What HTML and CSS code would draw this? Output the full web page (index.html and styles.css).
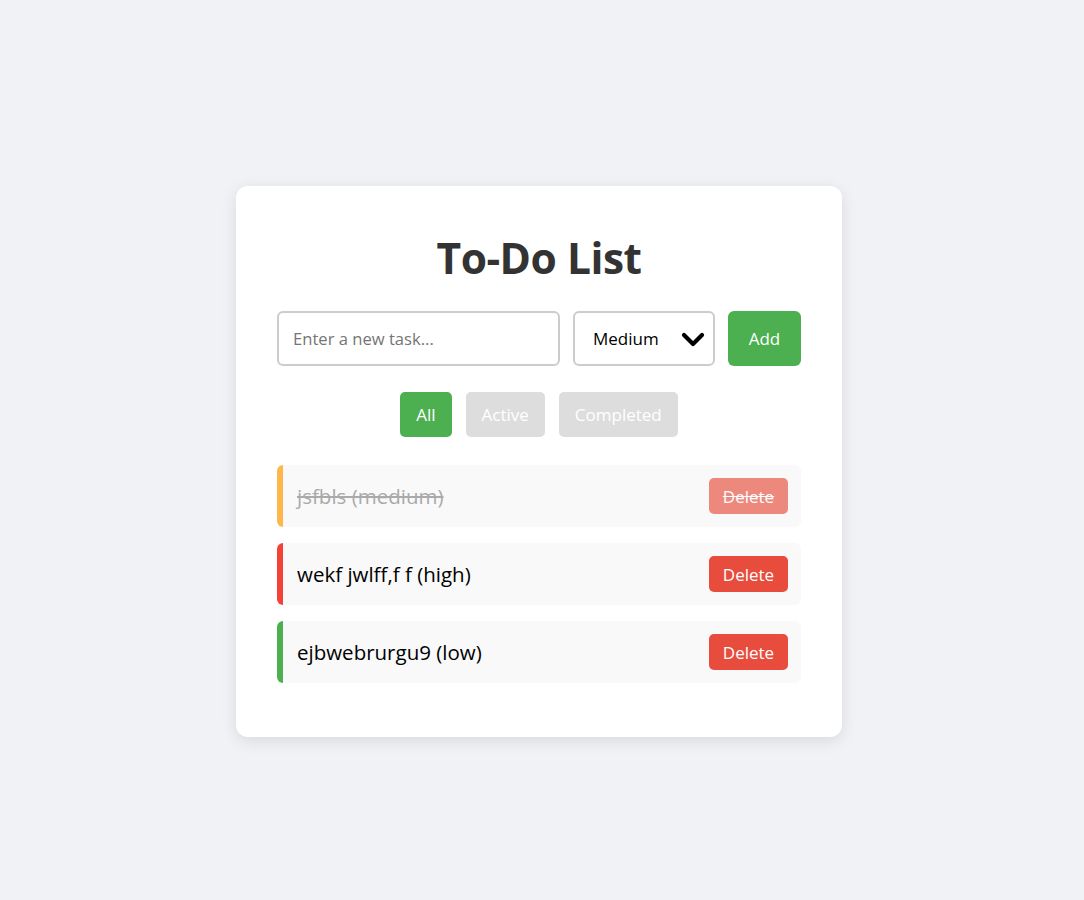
FILE: index.html
```html
<!DOCTYPE html>
<html lang="en">
<head>
<meta charset="utf-8">
<title>To-Do List</title>
<link rel="stylesheet" href="styles.css">
</head>
<body>
<main class="card">
  <h1 class="title">To-Do List</h1>
  <div class="add-row">
    <input class="task-input" type="text" placeholder="Enter a new task...">
    <div class="select-wrap">
      <select class="priority">
        <option>Low</option>
        <option selected>Medium</option>
        <option>High</option>
      </select>
      <svg class="chevron" viewBox="0 0 24 16" width="24" height="16" aria-hidden="true"><path d="M3 3 L12 12 L21 3" fill="none" stroke="#000" stroke-width="4.2" stroke-linecap="round" stroke-linejoin="round"/></svg>
    </div>
    <button class="btn-add">Add</button>
  </div>
  <div class="filters">
    <button class="filter active">All</button>
    <button class="filter">Active</button>
    <button class="filter">Completed</button>
  </div>
  <ul class="tasks">
    <li class="task medium done"><span class="task-text">jsfbls (medium)</span><button class="btn-del">Delete</button></li>
    <li class="task high"><span class="task-text">wekf jwlff,f f (high)</span><button class="btn-del">Delete</button></li>
    <li class="task low"><span class="task-text">ejbwebrurgu9 (low)</span><button class="btn-del">Delete</button></li>
  </ul>
</main>
</body>
</html>
```
FILE: styles.css
```css
* { box-sizing: border-box; }
html, body { margin: 0; padding: 0; }
body {
  background: #f0f2f5;
  font-family: "Open Sans", "Noto Sans", Arial, sans-serif;
  min-height: 900px;
  display: flex;
  justify-content: center;
  align-items: flex-start;
  padding-top: 186px;
  padding-right: 6px;
}
.card {
  width: 606px;
  background: #fff;
  border-radius: 12px;
  box-shadow: 0 4px 16px rgba(0,0,0,0.1);
  padding: 43px 41px 54px 41px;
}
.title {
  margin: 0 0 25px;
  text-align: center;
  color: #333;
  font-size: 42.5px;
  font-weight: 700;
  line-height: 57px;
  letter-spacing: -0.5px;
}
.add-row {
  display: flex;
  gap: 13px;
  height: 55px;
}
.task-input {
  width: 283px;
  border: 2px solid #ccc;
  border-radius: 6px;
  padding: 0 14px;
  font-family: inherit;
  font-size: 16.6px;
  color: #333;
  outline: none;
}
.task-input::placeholder { color: #757575; }
.select-wrap {
  position: relative;
  width: 142px;
}
.priority {
  appearance: none;
  -webkit-appearance: none;
  width: 100%;
  height: 100%;
  border: 2px solid #ccc;
  border-radius: 6px;
  background: #fff;
  padding: 0 18px;
  font-family: inherit;
  font-size: 17px;
  color: #000;
}
.chevron {
  position: absolute;
  right: 10px;
  top: 21px;
  width: 24px;
  height: 16px;
  pointer-events: none;
}
.btn-add {
  width: 73px;
  border: none;
  border-radius: 6px;
  background: #4caf50;
  color: #fff;
  font-family: inherit;
  font-size: 17px;
}
.filters {
  display: flex;
  justify-content: center;
  gap: 14px;
  margin-top: 26px;
}
.filter {
  height: 45px;
  padding: 0 16px;
  border: none;
  border-radius: 5px;
  background: #ddd;
  color: #fff;
  font-family: inherit;
  font-size: 17px;
}
.filter.active { background: #4caf50; }
.tasks {
  list-style: none;
  margin: 28px 0 0;
  padding: 0;
  display: flex;
  flex-direction: column;
  gap: 16px;
}
.task {
  height: 62px;
  display: flex;
  align-items: center;
  justify-content: space-between;
  background: #f9f9f9;
  border-radius: 6px;
  border-left: 6px solid #ccc;
  padding: 0 13px 0 14px;
}
.task.medium { border-left-color: #ffb74d; }
.task.high { border-left-color: #f44336; }
.task.low { border-left-color: #4caf50; }
.task-text {
  font-size: 20.5px;
  color: #000;
}
.task.done .task-text, .task.done .btn-del { text-decoration: line-through; }
.task.done .task-text { color: #aaa; }
.task.done .btn-del { opacity: 0.65; }
.btn-del {
  height: 36px;
  width: 79px;
  border: none;
  border-radius: 5px;
  background: #e74c3c;
  color: #fff;
  font-family: inherit;
  font-size: 17px;
}
```
